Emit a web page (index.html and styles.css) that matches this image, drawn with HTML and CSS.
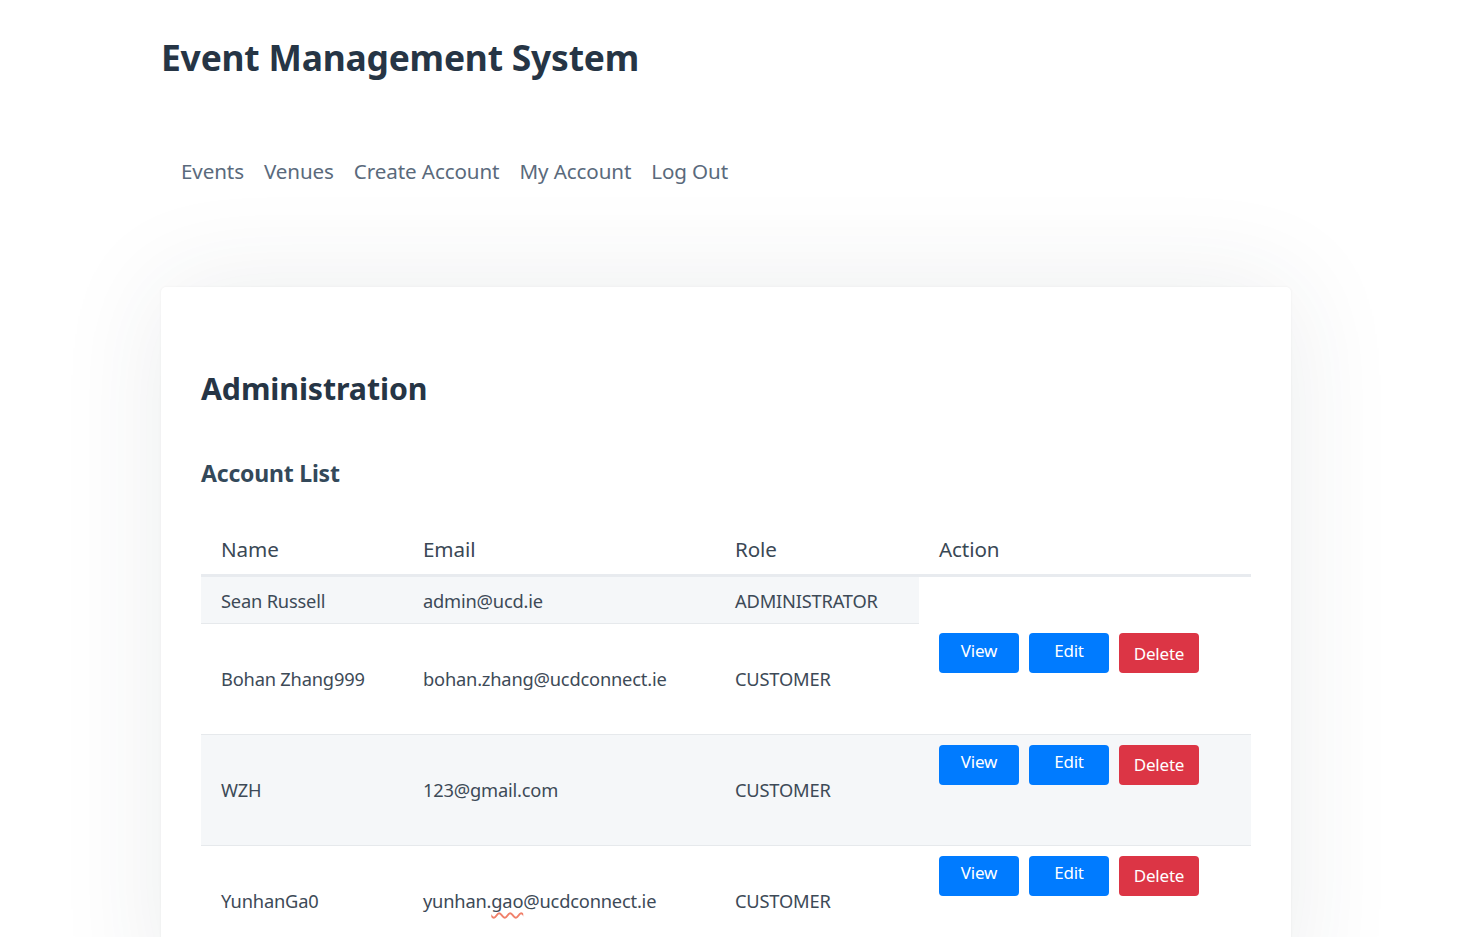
FILE: index.html
```html
<!DOCTYPE html>
<html lang="en">
<head>
<meta charset="utf-8">
<title>Event Management System</title>
<link rel="stylesheet" href="styles.css">
</head>
<body>
<div class="page">
  <header class="site-header">
    <h1 class="site-title">Event Management System</h1>
    <nav class="nav">
      <a href="#">Events</a>
      <a href="#">Venues</a>
      <a href="#">Create Account</a>
      <a href="#">My Account</a>
      <a href="#">Log Out</a>
    </nav>
  </header>
  <main class="card">
    <h2 class="card-title">Administration</h2>
    <h4 class="section-title">Account List</h4>
    <table class="accounts">
      <thead>
        <tr><th class="c-name">Name</th><th class="c-email">Email</th><th class="c-role">Role</th><th class="c-action">Action</th></tr>
      </thead>
      <tbody>
        <tr class="row-short striped"><td>Sean Russell</td><td>admin@ucd.ie</td><td>ADMINISTRATOR</td></tr>
        <tr class="row-tall">
          <td>Bohan Zhang999</td><td>bohan.zhang@ucdconnect.ie</td><td>CUSTOMER</td>
          <td class="actions"><div class="btns"><button class="btn btn-blue">View</button><button class="btn btn-blue">Edit</button><button class="btn btn-red">Delete</button></div></td>
        </tr>
        <tr class="row-tall striped">
          <td>WZH</td><td>123@gmail.com</td><td>CUSTOMER</td>
          <td class="actions"><div class="btns"><button class="btn btn-blue">View</button><button class="btn btn-blue">Edit</button><button class="btn btn-red">Delete</button></div></td>
        </tr>
        <tr class="row-tall">
          <td>YunhanGa0</td><td><span class="spell">yunhan.<u>gao</u>@ucdconnect.ie</span></td><td>CUSTOMER</td>
          <td class="actions"><div class="btns"><button class="btn btn-blue">View</button><button class="btn btn-blue">Edit</button><button class="btn btn-red">Delete</button></div></td>
        </tr>
      </tbody>
    </table>
  </main>
</div>
</body>
</html>
```

FILE: styles.css
```css
* { box-sizing: border-box; }
html, body { margin: 0; padding: 0; background: #ffffff; height: 937px; overflow: hidden; }
body {
  font-family: "Noto Sans", "Open Sans", "DejaVu Sans", sans-serif;
  color: #3b4956;
}
.page {
  padding-left: 161px;
  width: 1480px;
  height: 937px;
  overflow: hidden;
}
.site-header {
  padding-top: 33px;
}
.site-title {
  margin: 0;
  font-size: 35.4px;
  line-height: 48px;
  font-weight: 700;
  color: #263545;
  letter-spacing: -0.2px;
}
.nav {
  display: flex;
  margin-top: 74px;
  padding-left: 10px;
}
.nav a {
  padding: 0 10px;
  font-size: 20.6px;
  line-height: 32px;
  color: #5a6a7c;
  text-decoration: none;
  letter-spacing: -0.1px;
}
.card {
  margin-top: 100px;
  width: 1130px;
  background: #fff;
  border-radius: 5px;
  box-shadow: 0 0 110px rgba(40, 50, 70, 0.09), 0 0 3px rgba(0,0,0,0.05);
  padding: 82px 40px 40px;
}
.card-title {
  margin: 0;
  font-size: 30.3px;
  line-height: 40px;
  font-weight: 700;
  color: #263545;
  letter-spacing: -0.1px;
}
.section-title {
  margin: 48px 0 0;
  font-size: 23px;
  line-height: 32px;
  font-weight: 700;
  color: #34495a;
  letter-spacing: -0.2px;
}
.accounts {
  margin-top: 36px;
  width: 1050px;
  border-collapse: collapse;
  table-layout: fixed;
}
.c-name { width: 202px; }
.c-email { width: 312px; }
.c-role { width: 204px; }
.c-action { width: 332px; }
.accounts th {
  text-align: left;
  font-weight: 400;
  font-size: 20.6px;
  color: #3a4855;
  height: 50px;
  padding: 0 20px;
  border-bottom: 3px solid #e8ebef;
  letter-spacing: -0.1px;
}
.accounts td {
  font-size: 18.3px;
  color: #3d4a57;
  padding: 0 20px;
  letter-spacing: -0.2px;
  vertical-align: middle;
}
.accounts tbody tr { border-bottom: 1px solid #e6e9ec; }
.row-short td { height: 48px; padding-top: 1px; }
.row-tall td { height: 111px; }
.striped td { background: #f5f7f9; }
.row-short { border-bottom: none !important; }
.row-short td { border-bottom: 1px solid #e6e9ec; }
.actions { vertical-align: top !important; padding-top: 10px !important; }
.btns { display: flex; gap: 10px; }
.btn {
  width: 80px;
  height: 40px;
  border: none;
  border-radius: 4px;
  color: #fff;
  font-family: "Noto Sans", "Open Sans", sans-serif;
  font-size: 17px;
  padding: 0;
  letter-spacing: -0.2px;
}
.btn-blue { background: #007bff; padding-bottom: 6px; }
.btn-red { background: #dc3545; padding-top: 0; }
.spell u {
  text-decoration: underline wavy #f0806a;
  text-decoration-thickness: 1.5px;
  text-underline-offset: 4px;
}
```
